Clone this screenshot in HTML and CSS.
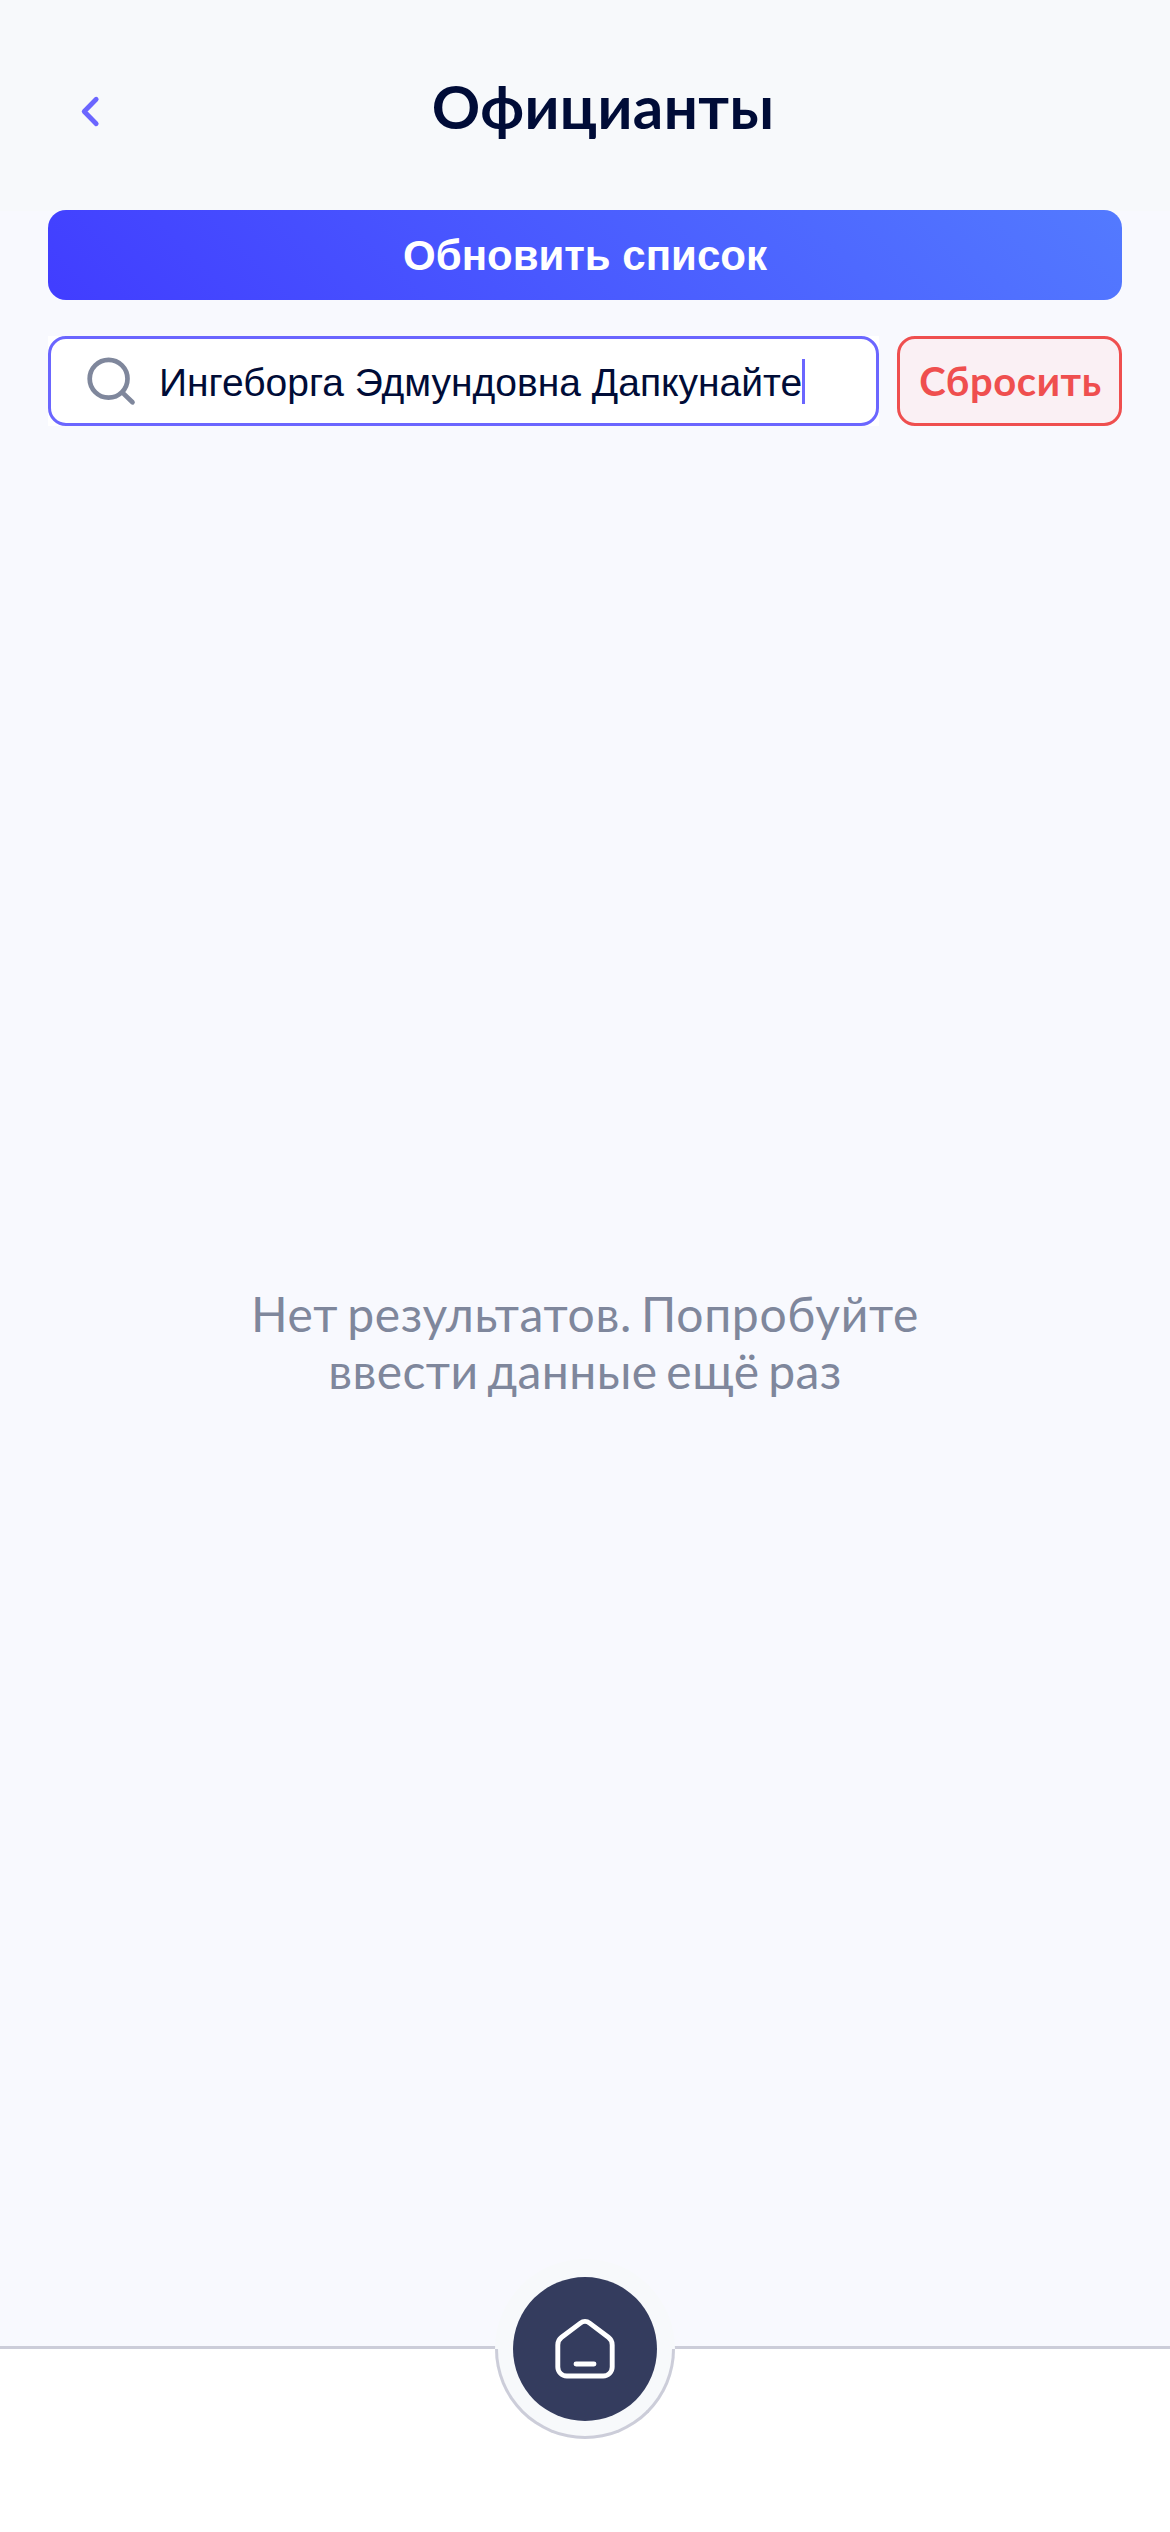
FILE: index.html
```html
<!DOCTYPE html>
<html lang="ru">
<head>
<meta charset="utf-8">
<title>Официанты</title>
<link rel="stylesheet" href="styles.css">
</head>
<body>
<div class="screen">
  <header class="header">
    <button class="back" aria-label="Назад">
      <svg width="24" height="36" viewBox="0 0 24 36"><path d="M18.2 6.2 6.2 18.5l12 12.3"/></svg>
    </button>
    <h1 class="title">Официанты</h1>
  </header>
  <main class="content">
    <button class="refresh">Обновить список</button>
    <div class="search-row">
      <div class="search">
        <label class="field">
          <svg class="search-icon" width="54" height="54" viewBox="0 0 54 54"><circle cx="25.6" cy="24.7" r="18.9"/><path d="m39.5 38.6 10 9.7"/></svg>
          <span class="query">Ингеборга Эдмундовна Дапкунайте</span><span class="caret"></span>
        </label>
      </div>
      <button class="reset">Сбросить</button>
    </div>
    <p class="empty"><span class="line wide">Нет результатов. Попробуйте</span><span class="line">ввести данные ещё раз</span></p>
  </main>
  <nav class="tabbar">
    <div class="dock">
      <button class="home" aria-label="Главная">
        <svg width="72" height="72" viewBox="0 0 72 72"><path d="M31.4 10.1a7.6 7.6 0 0 1 9.2 0l18.8 14.2a9.6 9.6 0 0 1 3.8 7.6V54a9 9 0 0 1-9 9H17.8a9 9 0 0 1-9-9V31.9a9.6 9.6 0 0 1 3.8-7.6Z"/><path d="M27 51h18"/></svg>
      </button>
    </div>
  </nav>
</div>
</body>
</html>
```

FILE: styles.css
```css
*, *::after { box-sizing: border-box; }
body { margin: 0; background: #f8f9fe; font-family: Lato, "Noto Sans", sans-serif; color: #000c37; }
button { padding: 0; border: 0; background: none; font: inherit; cursor: pointer; }
svg { display: block; fill: none; stroke-linecap: round; stroke-linejoin: round; }
.screen { display: flex; flex-direction: column; width: 1170px; height: 2532px; }
.header { display: grid; grid-template-columns: 84px 1fr 126px; align-items: center; height: 211px; padding: 10px 0 0 78px; background: #f7f9fb; }
.back { width: 24px; height: 36px; stroke: #6b66ff; stroke-width: 4.8; }
.title { margin: 0 0 9px; text-align: center; font-size: 60px; font-weight: 700; line-height: 82px; letter-spacing: 0.4px; white-space: nowrap; }
.content { display: flex; flex: 1; flex-direction: column; margin-top: -1px; padding: 0 48px; }
.refresh { height: 90px; padding-top: 1px; border-radius: 18px; background: linear-gradient(45deg, #413dff, #537aff); color: #fff; font: bold 42px/89px "Liberation Sans", sans-serif; }
.search-row { display: flex; gap: 18px; height: 90px; margin-top: 36px; }
.search { flex: 1; background: #fff; }
.field { display: flex; align-items: center; height: 90px; padding-left: 32px; border: 3px solid #6b66ff; border-radius: 18px; }
.search-icon { stroke: #7f879c; stroke-width: 4.7; }
.query { margin-left: 22px; padding-top: 2px; font: 39px/45px "Liberation Sans", sans-serif; white-space: nowrap; }
.caret { width: 3px; height: 45px; margin-top: 1px; background: #6b66ff; }
.reset { width: 225px; padding: 0 0 0 2px; border: 3px solid #ef4f4f; border-radius: 18px; background: #faf0f4; color: #ef4f4f; font-size: 40px; font-weight: 700; letter-spacing: 0.6px; }
.empty { margin: 859px 0 0; text-align: center; color: #7f879c; font-size: 48px; line-height: 57px; }
.line { display: block; letter-spacing: 0.45px; word-spacing: -4px; }
.wide { letter-spacing: 0.7px; }
.tabbar { display: flex; justify-content: center; height: 186px; border-top: 3px solid #cccdd9; background: #fff; }
.dock { position: relative; display: flex; align-items: center; justify-content: center; width: 180px; height: 180px; margin-top: -90px; border-radius: 50%; background: #f7f9fb; }
.dock::after { content: ""; position: absolute; left: 0; bottom: 0; width: 180px; height: 90px; border: 3px solid #cccdd9; border-top: 0; border-radius: 0 0 90px 90px; }
.home { position: relative; z-index: 1; display: flex; align-items: center; justify-content: center; width: 144px; height: 144px; border-radius: 50%; background: #343c5e; stroke: #fff; stroke-width: 4.9; }
```
